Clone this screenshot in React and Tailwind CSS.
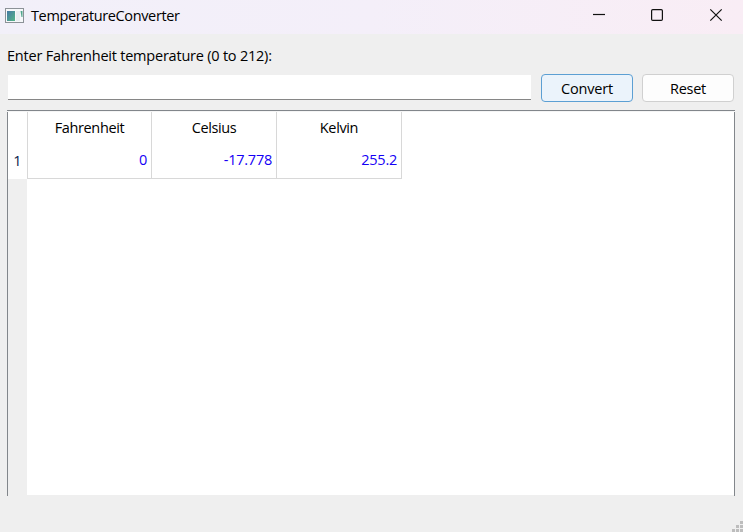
const columns = [
  { name: "Fahrenheit", value: "0", width: "w-[124px]" },
  { name: "Celsius", value: "-17.778", width: "w-[125px]" },
  { name: "Kelvin", value: "255.2", width: "w-[125px]" },
];

function AppIcon() {
  return (
    <svg width="19" height="15" viewBox="0 0 19 15" className="shrink-0">
      <defs>
        <linearGradient id="pane" x1="0" y1="0" x2="1" y2="1">
          <stop offset="0" stopColor="#4579a5" />
          <stop offset="1" stopColor="#55b587" />
        </linearGradient>
      </defs>
      <rect x="0.5" y="0.5" width="18" height="14" fill="#f6f8fa" stroke="#8c9297" />
      <rect x="2" y="3" width="8" height="10" fill="url(#pane)" />
      <rect x="11" y="3" width="4" height="10" fill="#e9edf1" />
      <path d="M15.5 3h2v6h-1z" fill="#50a58c" />
    </svg>
  );
}

function TitleBar() {
  return (
    <header className="flex h-[34px] shrink-0 items-start bg-linear-to-r from-[#f2f0f9] via-[#f4eff9] to-[#f9edf5] pl-[5px]">
      <div className="flex h-[31px] grow items-center gap-[7px]">
        <AppIcon />
        <h1 className="text-[14.5px] tracking-[-0.37px]">TemperatureConverter</h1>
      </div>
      <svg width="150" height="31" viewBox="593 0 150 31" fill="none" stroke="#111" strokeWidth="1.2">
        <path d="M593 14.5h12" />
        <rect x="651.6" y="9.6" width="10.8" height="10.8" rx="1.2" />
        <path d="M710.3 9.3l11.4 11.4M721.7 9.3l-11.4 11.4" />
      </svg>
    </header>
  );
}

function Table() {
  return (
    <div className="flex h-[386px] flex-col border-t border-[#82868b]">
      <div className="h-px bg-[#f5f5f5]" />
      <div className="flex grow border-x border-[#82868b] bg-linear-to-b from-white from-[383px] to-[#efefef] to-[383px]">
        <div className="flex w-[19px] flex-col bg-[#efefef]">
          <div className="flex h-[67px] items-end justify-center bg-white pb-[8px] text-[14.5px] leading-5 text-[#051a48]">1</div>
        </div>
        <div className="flex h-[67px] border-b border-l border-[#d8d8d8]">
          {columns.map((c) => (
            <div key={c.name} className={`${c.width} border-r border-[#d8d8d8] pt-[6px] text-[14.5px] leading-5`}>
              <div className="text-center tracking-[-0.37px]">{c.name}</div>
              <div className="mt-3 pr-1 text-right tracking-[-0.25px] text-[#1400f5]">{c.value}</div>
            </div>
          ))}
        </div>
      </div>
    </div>
  );
}

export default function App() {
  return (
    <div className="flex h-[532px] w-[743px] flex-col overflow-hidden bg-[#efefef] font-['Open_Sans','Noto_Sans',sans-serif] text-black">
      <TitleBar />
      <main className="flex flex-col pr-2 pl-[7px]">
        <label className="mt-3 h-5 text-[14.5px] leading-5 tracking-[-0.22px]">Enter Fahrenheit temperature (0 to 212):</label>
        <div className="mt-2 mb-2 flex h-7 items-start pl-px">
          <input className="mt-px h-[25px] w-[523px] border-b border-[#868686] bg-white outline-none" />
          <button className="ml-[10px] h-7 w-[92px] rounded-[4px] border border-[#5c9fd3] bg-[#ebf3fb] pt-px text-[14.5px] leading-5 tracking-[-0.15px]">Convert</button>
          <button className="ml-[9px] h-7 w-[92px] rounded-[4px] border border-[#d0d0d0] bg-[#fdfdfd] pt-px text-[14.5px] leading-5 tracking-[-0.25px]">Reset</button>
        </div>
        <Table />
      </main>
      <footer className="flex grow items-end justify-end">
        <svg width="12" height="12" fill="#bdbdbd">
          <path d="M9 1h3v3H9zM5 5h3v3H5zM9 5h3v3H9zM1 9h3v3H1zM5 9h3v3H5zM9 9h3v3H9z" />
        </svg>
      </footer>
    </div>
  );
}
